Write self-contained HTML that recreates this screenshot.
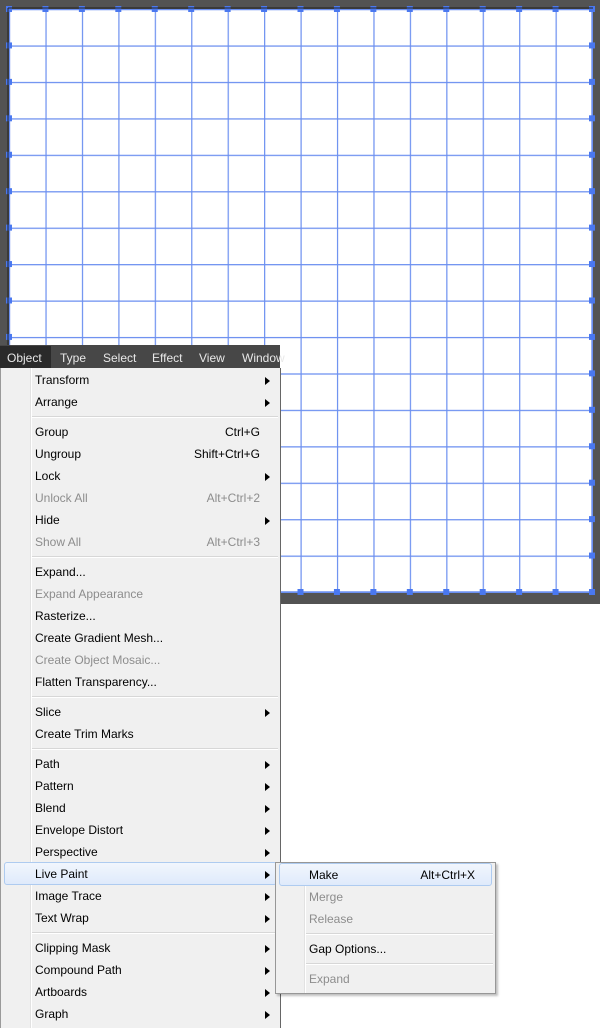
<!DOCTYPE html><html><head><style>
body{margin:0;width:600px;height:1028px;position:relative;overflow:hidden;background:#fff;font-family:"Liberation Sans",sans-serif;font-size:12px}
.bar{position:absolute;left:0;top:345px;width:280px;height:23px;background:#474747;color:#e8e8e8;font-size:12px}
.bar span{position:absolute;top:6px}
.menu{position:absolute;left:0;top:368px;width:279px;height:660px;background:#f0f0f0;border-left:1px solid #9a9a9a;border-right:1px solid #666}
.gut{position:absolute;left:29px;top:0;bottom:0;width:1px;background:#e2e2e2;border-right:1px solid #fff}
.it{position:absolute;left:0;width:279px;height:22px;line-height:23px;color:#000}
.it .t{position:absolute;left:34px}
.it .s{position:absolute;right:20px}
.it.d{color:#8d8d8d}
.ar{position:absolute;right:10px;top:8px;width:0;height:0;border-left:5px solid #000;border-top:4px solid transparent;border-bottom:4px solid transparent}
.sep{position:absolute;left:31px;right:2px;height:1px;background:#d7d7d7;border-bottom:1px solid #fff}
.hl{position:absolute;border:1px solid #aecbf0;border-radius:3px;background:linear-gradient(#f1f6fd,#dfeafb)}
.sub{position:absolute;left:275px;top:862px;width:219px;height:130px;background:#f0f0f0;border:1px solid #979797;box-shadow:2px 2px 2px rgba(0,0,0,.25)}
.sub .it{width:219px}
</style></head><body>
<svg width="600" height="604" style="position:absolute;left:0;top:0">
<defs>
<pattern id="gp" x="9" y="9" width="36.4375" height="36.4375" patternUnits="userSpaceOnUse">
<path d="M0.5 0V36.4375M0 0.5H36.4375" stroke="#6b8ff0" stroke-width="1.4" fill="none"/>
</pattern>
<pattern id="hp" x="6" y="6" width="36.4375" height="36.4375" patternUnits="userSpaceOnUse">
<rect x="0" y="0" width="6" height="6" fill="#4a78f0"/>
</pattern>
</defs>
<rect width="600" height="604" fill="#535353"/>
<rect x="9" y="9" width="583" height="583" fill="#fff"/>
<rect x="9" y="9" width="584" height="584" fill="url(#gp)"/>
<path d="M592 9V593M9 592H593" stroke="#6b8ff0" stroke-width="1.4"/>
<rect x="6" y="6" width="590" height="6" fill="url(#hp)"/>
<rect x="6" y="589" width="590" height="6" fill="url(#hp)"/>
<rect x="6" y="6" width="6" height="590" fill="url(#hp)"/>
<rect x="589" y="6" width="6" height="590" fill="url(#hp)"/>
<rect x="589" y="6" width="6" height="6" fill="#4a78f0"/>
<rect x="589" y="589" width="6" height="6" fill="#4a78f0"/>
<rect x="6" y="589" width="6" height="6" fill="#4a78f0"/>
<line x1="8" y1="8" x2="8" y2="593" stroke="#222"/>
<line x1="8" y1="8" x2="593" y2="8" stroke="#222"/>
</svg>
<div class="bar"><div style="position:absolute;left:0;top:1px;width:51px;height:22px;background:#2a2a2a"></div>
<span style="left:7px">Object</span><span style="left:60px">Type</span><span style="left:103px">Select</span><span style="left:152px">Effect</span><span style="left:199px">View</span><span style="left:242px">Window</span></div>
<div class="menu" id="m"><div class="gut"></div></div>
<div class="sub" id="s"><div class="gut" style="left:28px"></div></div>
<script>
var items=[["Transform","",1],["Arrange","",1],0,["Group","Ctrl+G"],["Ungroup","Shift+Ctrl+G"],["Lock","",1],["Unlock All","Alt+Ctrl+2",0,1],["Hide","",1],["Show All","Alt+Ctrl+3",0,1],0,["Expand..."],["Expand Appearance","",0,1],["Rasterize..."],["Create Gradient Mesh..."],["Create Object Mosaic...","",0,1],["Flatten Transparency..."],0,["Slice","",1],["Create Trim Marks"],0,["Path","",1],["Pattern","",1],["Blend","",1],["Envelope Distort","",1],["Perspective","",1],["Live Paint","",1,0,1],["Image Trace","",1],["Text Wrap","",1],0,["Clipping Mask","",1],["Compound Path","",1],["Artboards","",1],["Graph","",1]];
function build(el,list,y0,w,left){var y=y0,h='';list.forEach(function(it){if(!it){h+='<div class="sep" style="top:'+(y+3)+'px;left:'+(left-3)+'px"></div>';y+=8;return;}
if(it[4])h+='<div class="hl" style="left:3px;top:'+(y-1)+'px;width:'+(w-8)+'px;height:21px"></div>';
h+='<div class="it'+(it[3]?' d':'')+'" style="top:'+y+'px"><span class="t" style="left:'+left+'px">'+it[0]+'</span>'+(it[1]?'<span class="s">'+it[1]+'</span>':'')+(it[2]?'<span class="ar"></span>':'')+'</div>';y+=22;});el.insertAdjacentHTML('beforeend',h);}
build(document.getElementById('m'),items,1,279,34);
build(document.getElementById('s'),[["Make","Alt+Ctrl+X",0,0,1],["Merge","",0,1],["Release","",0,1],0,["Gap Options..."],0,["Expand","",0,1]],1,219,33);
</script>
</body></html>
